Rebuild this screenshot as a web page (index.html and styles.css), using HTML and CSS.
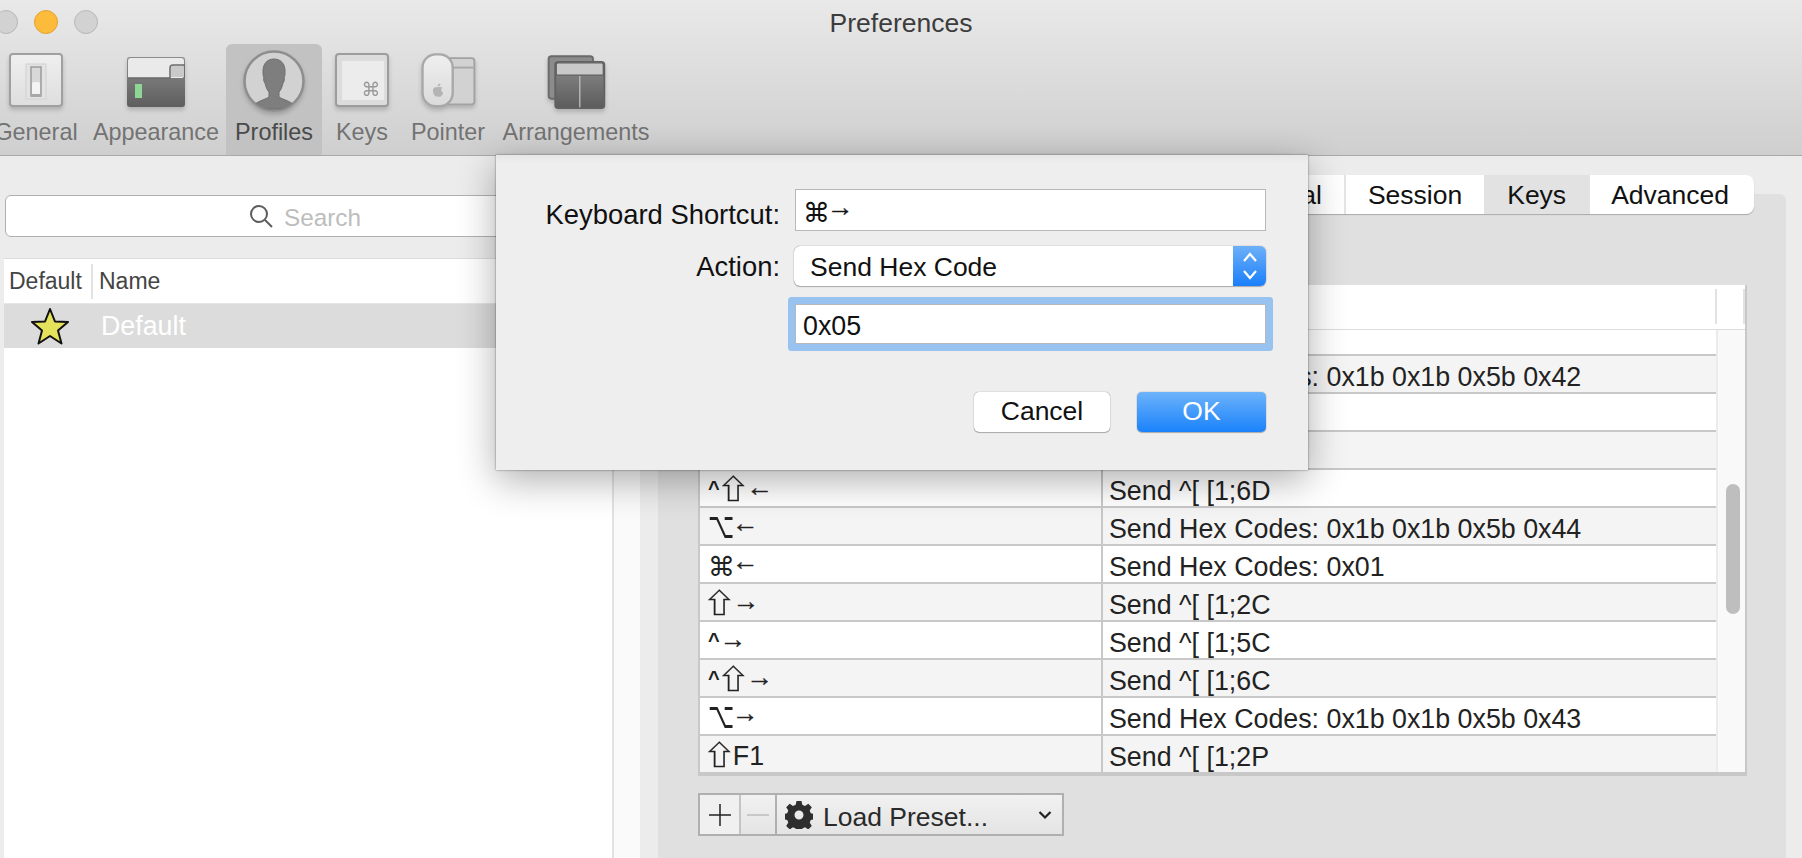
FILE: index.html
```html
<!DOCTYPE html>
<html lang="en">
<head>
  <meta charset="UTF-8">
  <title>Preferences</title>
  <link rel="stylesheet" href="styles.css">
</head>
<body>
  <div class="window">
    <header class="toolbar">
      <div class="titlebar">
        <div class="dots">
          <span class="dot"></span>
          <span class="dot dot-yellow"></span>
          <span class="dot"></span>
        </div>
        <div class="title">Preferences</div>
      </div>
      <nav class="prefs-nav">
        <div class="nav-item nav-general">
          <svg width="60" height="66" viewBox="0 0 60 66">
            <defs>
              <linearGradient id="plate" x1="0" y1="0" x2="0" y2="1"><stop offset="0" stop-color="#efefef"/><stop offset="1" stop-color="#dedede"/></linearGradient>
            </defs>
            <rect x="4" y="10" width="52" height="52" rx="3" fill="url(#plate)" stroke="#a0a0a0" stroke-width="2"/>
            <rect x="20" y="20" width="20" height="35" fill="#e3e3e3" stroke="#d2d2d2"/>
            <rect x="25" y="23" width="10" height="29" fill="#d8d8d8" stroke="#9c9c9c" stroke-width="1.5"/>
            <rect x="26" y="38" width="8" height="13" rx="2" fill="#f4f4f4"/>
            <rect x="25" y="50" width="10" height="3" fill="#a8a8a8"/>
          </svg>
          <span class="nav-label">General</span>
        </div>
        <div class="nav-item nav-appearance">
          <svg width="60" height="66" viewBox="0 0 60 66">
            <defs>
              <linearGradient id="termdark" x1="0" y1="0" x2="0" y2="1"><stop offset="0" stop-color="#8c8c8c"/><stop offset="1" stop-color="#5e5e5e"/></linearGradient>
            </defs>
            <rect x="1" y="13" width="58" height="50" rx="3" fill="url(#termdark)"/>
            <path d="M2 17a3 3 0 0 1 3-3h50a3 3 0 0 1 3 3v17H2z" fill="#eaeaea"/>
            <path d="M2 34h42v-10a3 3 0 0 1 3-3h11v13" fill="#eaeaea" stroke="#6a6a6a" stroke-width="1.5"/>
            <rect x="45" y="22" width="13" height="11" fill="#c9c9c9"/>
            <rect x="9" y="40" width="7" height="14" fill="#8fd694"/>
          </svg>
          <span class="nav-label">Appearance</span>
        </div>
        <div class="nav-item nav-profiles is-active">
          <svg width="64" height="66" viewBox="0 0 64 66">
            <defs>
              <clipPath id="avatar"><circle cx="32" cy="37" r="29"/></clipPath>
            </defs>
            <circle cx="32" cy="37" r="29.5" fill="#d2d2d2" stroke="#8e8e8e" stroke-width="2.5"/>
            <g clip-path="url(#avatar)">
              <path d="M32 15c-7 0-11 5-11 12 0 3 0 5 1 7-1 1 0 4 1 5 1 4 2 7 4 9v5c-4 3-14 4-18 12h46c-4-8-14-9-18-12v-5c2-2 3-5 4-9 1-1 2-4 1-5 1-2 1-4 1-7 0-7-4-12-11-12z" fill="#7e7e7e" stroke="#6e6e6e"/>
            </g>
          </svg>
          <span class="nav-label">Profiles</span>
        </div>
        <div class="nav-item nav-keys">
          <svg width="60" height="66" viewBox="0 0 60 66">
            <rect x="4" y="10" width="52" height="52" rx="3" fill="#dcdcdc" stroke="#9c9c9c" stroke-width="2"/>
            <rect x="10" y="17" width="42" height="39" fill="#ececec"/>
            <text x="39" y="52" class="key-glyph">⌘</text>
          </svg>
          <span class="nav-label">Keys</span>
        </div>
        <div class="nav-item nav-pointer">
          <svg width="60" height="70" viewBox="0 0 60 70">
            <defs>
              <linearGradient id="mouse" x1="0" y1="0" x2="0" y2="1"><stop offset="0" stop-color="#efefef"/><stop offset="1" stop-color="#dadada"/></linearGradient>
            </defs>
            <rect x="26" y="15" width="32" height="49" rx="3" fill="#d2d2d2" stroke="#a2a2a2" stroke-width="2"/>
            <path d="M27 25h30" stroke="#a8a8a8" stroke-width="2"/>
            <rect x="3" y="11" width="32" height="55" rx="14" fill="url(#mouse)" stroke="#a8a8a8" stroke-width="2.5"/>
            <path d="M19 46c2-1 4 0 5 0-2 2-1 5 1 6-1 2-2 4-4 4-1 0-2-1-3 0-3 0-6-8-2-10 1 0 2 0 3 0zm0-1c0-2 1-3 3-3 0 2-1 3-3 3z" fill="#b4b4b4"/>
          </svg>
          <span class="nav-label">Pointer</span>
        </div>
        <div class="nav-item nav-arrangements">
          <svg width="64" height="70" viewBox="0 0 64 70">
            <defs>
              <linearGradient id="arrdark" x1="0" y1="0" x2="0" y2="1"><stop offset="0" stop-color="#8a8a8a"/><stop offset="1" stop-color="#5c5c5c"/></linearGradient>
            </defs>
            <rect x="3" y="13" width="47" height="45" rx="3" fill="#8c8c8c" stroke="#6a6a6a" stroke-width="2"/>
            <rect x="10" y="19" width="52" height="49" rx="3" fill="url(#arrdark)" stroke="#626262" stroke-width="2"/>
            <path d="M11 33v-11a2 2 0 0 1 2-2h46a2 2 0 0 1 2 2v11z" fill="#c9c9c9" stroke="#626262" stroke-width="1.5"/>
            <path d="M36 34v33" stroke="#b8b8b8" stroke-width="1.5"/>
          </svg>
          <span class="nav-label">Arrangements</span>
        </div>
      </nav>
    </header>

    <main class="main">
      <aside class="sidebar">
        <div class="search">
          <svg width="24" height="24" viewBox="0 0 24 24"><circle cx="10" cy="10" r="8" fill="none" stroke="#5c5c5c" stroke-width="2"/><path d="M16 16l7 7" stroke="#5c5c5c" stroke-width="2"/></svg>
          <span>Search</span>
        </div>
        <div class="profile-wrap">
          <div class="profile-list">
            <div class="profile-head">
              <span class="head-default">Default</span>
              <span class="head-name">Name</span>
            </div>
            <div class="profile-row">
              <span class="star">
                <svg width="40" height="38" viewBox="0 0 40 38"><path d="M20 2l5 12.5 13 .5-10 8.500 3.500 13L20 29l-11.500 7.500 3.500-13-10-8.500 13-.5z" fill="#e4e25a" stroke="#111" stroke-width="2" stroke-linejoin="round"/></svg>
              </span>
              <span class="profile-name">Default</span>
            </div>
          </div>
          <div class="list-scroll"></div>
        </div>
      </aside>

      <section class="prefs">
        <div class="group">
          <div class="tabs">
            <div class="tab">Terminal</div>
            <div class="tab">Session</div>
            <div class="tab is-active">Keys</div>
            <div class="tab tab-last">Advanced</div>
          </div>

          <div class="keytable">
            <div class="keyhead"><span class="keyhead-end"></span></div>
            <div class="keybody">
              <div class="keyrows">
                <div class="keyrow keyrow-cut"><div class="keycol"></div><div></div></div>
                <div class="keyrow"><div class="keycol"></div><div class="actioncol">Send Hex Codes: 0x1b 0x1b 0x5b 0x42</div></div>
                <div class="keyrow"><div class="keycol"></div><div></div></div>
                <div class="keyrow"><div class="keycol"></div><div></div></div>
                <div class="keyrow"><div class="keycol"><span class="k-ctrl">^</span><span class="k-shift">⇧</span><span class="k-arrow">←</span></div><div class="actioncol">Send ^[ [1;6D</div></div>
                <div class="keyrow"><div class="keycol"><span class="k-opt">⌥</span><span class="k-arrow">←</span></div><div class="actioncol">Send Hex Codes: 0x1b 0x1b 0x5b 0x44</div></div>
                <div class="keyrow"><div class="keycol"><span class="k-cmd">⌘</span><span class="k-arrow">←</span></div><div class="actioncol">Send Hex Codes: 0x01</div></div>
                <div class="keyrow"><div class="keycol"><span class="k-shift">⇧</span><span class="k-arrow">→</span></div><div class="actioncol">Send ^[ [1;2C</div></div>
                <div class="keyrow"><div class="keycol"><span class="k-ctrl">^</span><span class="k-arrow">→</span></div><div class="actioncol">Send ^[ [1;5C</div></div>
                <div class="keyrow"><div class="keycol"><span class="k-ctrl">^</span><span class="k-shift">⇧</span><span class="k-arrow">→</span></div><div class="actioncol">Send ^[ [1;6C</div></div>
                <div class="keyrow"><div class="keycol"><span class="k-opt">⌥</span><span class="k-arrow">→</span></div><div class="actioncol">Send Hex Codes: 0x1b 0x1b 0x5b 0x43</div></div>
                <div class="keyrow keyrow-last"><div class="keycol"><span class="k-shift">⇧</span>F1</div><div class="actioncol">Send ^[ [1;2P</div></div>
              </div>
              <div class="scrollbar"><div class="thumb"></div></div>
            </div>
          </div>

          <div class="keybar">
            <div class="barbtn barbtn-add">
              <svg width="24" height="24" viewBox="0 0 24 24"><path d="M12 1v22M1 12h22" stroke="#222" stroke-width="1.500"/></svg>
            </div>
            <div class="barbtn barbtn-remove">
              <svg width="24" height="24" viewBox="0 0 24 24"><path d="M1 12h22" stroke="#bdbdbd" stroke-width="1.500"/></svg>
            </div>
            <div class="barbtn barbtn-preset">
              <svg width="28" height="28" viewBox="0 0 28 28"><path d="M11.500 0h5l.8 3.800 2.700 1.100 3.300-2.100 3.500 3.500-2.100 3.300 1.100 2.700 3.800.8v5l-3.800.8-1.100 2.700 2.100 3.300-3.500 3.500-3.300-2.100-2.700 1.100-.8 3.800h-5l-.8-3.800-2.700-1.100-3.300 2.100-3.500-3.500 2.100-3.300-1.100-2.700-3.800-.8v-5l3.800-.8 1.100-2.700-2.100-3.300 3.500-3.500 3.300 2.100 2.700-1.100zM14 9.500a4.500 4.500 0 1 0 0 9 4.500 4.500 0 0 0 0-9z" fill="#2e2e2e" fill-rule="evenodd"/></svg>
              <span class="preset-label">Load Preset...</span>
              <svg width="14" height="10" viewBox="0 0 14 10"><path d="M1.500 2L7 7.500 12.500 2" fill="none" stroke="#222" stroke-width="2.200"/></svg>
            </div>
          </div>
        </div>
      </section>
    </main>

    <div class="dialog">
      <div class="form">
        <label class="form-label form-label-first">Keyboard Shortcut:</label>
        <div class="field"><span class="k-cmd">⌘</span><span class="k-arrow">→</span></div>
        <label class="form-label">Action:</label>
        <div class="popup">
          <span class="popup-text">Send Hex Code</span>
          <span class="popup-arrows">
            <svg width="16" height="30" viewBox="0 0 16 30"><path d="M2 10l6-7 6 7M2 20l6 7 6-7" fill="none" stroke="#fff" stroke-width="2.200"/></svg>
          </span>
        </div>
        <span></span>
        <div class="field field-focus">0x05</div>
      </div>
      <div class="dialog-buttons">
        <div class="btn">Cancel</div>
        <div class="btn btn-primary">OK</div>
      </div>
    </div>
  </div>
</body>
</html>
```

FILE: styles.css
```css
* {
  box-sizing: border-box;
}

body {
  margin: 0;
  font-family: "Liberation Sans", "DejaVu Sans", sans-serif;
  font-size: 26.5px;
  color: #222;
  background: #ececec;
}

.window {
  position: relative;
  width: 1802px;
  height: 858px;
  overflow: hidden;
  display: flex;
  flex-direction: column;
  background: #ececec;
}

/* key symbols */
.k-ctrl {
  font-size: 20px;
  font-weight: 700;
  vertical-align: 4px;
}

.k-shift {
  display: inline-block;
  margin-left: -2px;
  font-family: "Noto Sans CJK JP", "DejaVu Sans", sans-serif;
  transform: scaleX(1.2);
  -webkit-text-stroke: 0.4px #222;
}

.k-ctrl + .k-shift {
  margin-left: 0;
}

.k-cmd {
  display: inline-block;
  width: 24px;
  font-family: "DejaVu Sans", sans-serif;
  transform: translateY(3px);
}

.k-opt {
  display: inline-block;
  width: 24px;
  font-family: "DejaVu Sans", sans-serif;
  transform: scale(0.85, 1.35);
  transform-origin: left center;
}

.k-arrow {
  display: inline-block;
  transform: translateY(-3px);
  -webkit-text-stroke: 0.3px #222;
}

/* toolbar */
.toolbar {
  height: 156px;
  flex-shrink: 0;
  background: linear-gradient(to bottom, #e9e9e9, #cfcfcf);
  border-bottom: 1px solid #a9a9a9;
}

.titlebar {
  height: 44px;
  display: grid;
  grid-template-columns: 1fr auto 1fr;
  align-items: center;
}

.title {
  color: #3c3c3c;
  font-size: 26.5px;
  padding-top: 2px;
}

.dots {
  display: flex;
  gap: 16px;
  margin-left: -6px;
}

.dot {
  width: 24px;
  height: 24px;
  border-radius: 50%;
  background: #d2d2d2;
  border: 1px solid #b8b8b8;
}

.dot-yellow {
  background: #fdbb3c;
  border-color: #e3a22f;
}

.prefs-nav {
  display: flex;
  margin-left: -14px;
  height: 111px;
}

.nav-item {
  display: flex;
  flex-direction: column;
  align-items: center;
  border-radius: 6px 6px 0 0;
  color: #737373;
}

.nav-item svg {
  height: 66px;
  flex-shrink: 0;
  overflow: visible;
  filter: drop-shadow(0 3px 2px rgba(0, 0, 0, 0.18));
}

.nav-item.is-active {
  background: #c2c2c2;
  color: #4a4a4a;
}

.nav-label {
  font-size: 23.4px;
  line-height: 44px;
  white-space: nowrap;
}

.nav-general { width: 100px; }
.nav-appearance { width: 140px; }
.nav-profiles { width: 96px; }
.nav-keys { width: 80px; }
.nav-pointer { width: 92px; }
.nav-arrangements { width: 164px; }

.key-glyph {
  font-family: "DejaVu Sans", sans-serif;
  font-size: 19px;
  fill: #9a9a9a;
  text-anchor: middle;
}

/* main area */
.main {
  flex: 1;
  display: flex;
  min-height: 0;
}

.sidebar {
  width: 658px;
  flex-shrink: 0;
  padding-top: 39px;
  display: flex;
  flex-direction: column;
}

.search {
  margin-left: 5px;
  width: 600px;
  height: 42px;
  flex-shrink: 0;
  display: flex;
  align-items: center;
  justify-content: center;
  gap: 11px;
  background: #fff;
  border: 1px solid #b0b0b0;
  border-radius: 6px;
  color: #bdbdbd;
  font-size: 24.3px;
}

.search span {
  padding-top: 3px;
}

.profile-wrap {
  flex: 1;
  display: flex;
  margin-top: 21px;
  margin-left: 4px;
  margin-right: 18px;
}

.profile-list {
  width: 610px;
  background: #fff;
  border-right: 2px solid #e2e2e2;
  border-top: 1px solid #dcdcdc;
}

.list-scroll {
  flex: 1;
  background: #fafafa;
}

.profile-head {
  height: 45px;
  display: flex;
  align-items: center;
  font-size: 23px;
  color: #444;
  border-bottom: 1px solid #e6e6e6;
}

.head-default {
  width: 89px;
  height: 35px;
  line-height: 35px;
  padding-left: 5px;
  border-right: 2px solid #e2e2e2;
}

.head-name {
  padding-left: 6px;
}

.profile-row {
  height: 44px;
  display: flex;
  align-items: center;
  background: #dcdcdc;
  color: #fff;
}

.star {
  width: 97px;
  padding-left: 26px;
  display: flex;
}

.profile-name {
  font-size: 26.8px;
}

/* right side */
.prefs {
  flex: 1;
  padding: 38px 16px 0 0;
  min-width: 0;
}

.group {
  height: 100%;
  display: flex;
  flex-direction: column;
  background: #e0e0e0;
  border-radius: 6px 6px 0 0;
  padding: 0 39px 0 40px;
}

.tabs {
  display: flex;
  justify-content: flex-end;
  height: 39px;
  flex-shrink: 0;
  margin: -19px -7px 0 0;
  background: #fff;
  border-radius: 0 8px 8px 0;
  box-shadow: 0 1px 1px #aaa;
}

.tab {
  display: flex;
  align-items: center;
  padding: 2px 22px 0;
  color: #111;
  border-left: 2px solid #e4e4e4;
  white-space: nowrap;
}

.tab.is-active {
  background: #e2e2e2;
  border-left: 0;
  padding: 2px 24px 0 23px;
}

.tab.tab-last {
  border-left: 0;
  padding: 2px 25px 0 21px;
}

.keytable {
  margin-top: 71px;
  height: 491px;
  flex-shrink: 0;
  display: flex;
  flex-direction: column;
  background: #fff;
  border: solid #c8c8c8;
  border-width: 0 2px 4px 2px;
}

.keyhead {
  height: 45px;
  flex-shrink: 0;
  padding-top: 4px;
  border-bottom: 1px solid #dcdcdc;
}

.keyhead-end {
  display: block;
  width: 30px;
  height: 35px;
  margin-left: auto;
  border-left: 2px solid #e2e2e2;
  border-right: 2px solid #e2e2e2;
}

.keybody {
  flex: 1;
  display: flex;
  min-height: 0;
}

.keyrows {
  flex: 1;
}

.keyrow {
  height: 38px;
  display: grid;
  grid-template-columns: 403px 1fr;
  border-bottom: 2px solid #c8c8c8;
  background: #fff;
  line-height: 36px;
  white-space: nowrap;
  font-size: 26.8px;
}

.keyrow:nth-child(even) {
  background: #f4f4f4;
}

.keyrow-cut {
  height: 26px;
}

.keyrow-last {
  height: 36px;
  border-bottom: 0;
}

.keycol {
  padding-left: 8px;
  border-right: 2px solid #c8c8c8;
}

.actioncol {
  padding: 3px 0 0 6px;
}

.scrollbar {
  width: 29px;
  padding: 154px 5px 0 8px;
  background: #f9f9f9;
  border-left: 2px solid #ececec;
}

.thumb {
  height: 130px;
  border-radius: 8px;
  background: #bebebe;
}

.keybar {
  display: flex;
  flex-shrink: 0;
  margin-top: 17px;
  height: 43px;
  border: 2px solid #b0b0b0;
  width: 366px;
  background: linear-gradient(to bottom, #f1f1f1, #e4e4e4);
}

.barbtn {
  display: flex;
  align-items: center;
  justify-content: center;
}

.barbtn-add {
  width: 39px;
  background: #f0f0f0;
}

.barbtn-remove {
  width: 38px;
  border-left: 2px solid #c4c4c4;
  border-right: 2px solid #b0b0b0;
}

.barbtn-preset {
  flex: 1;
  justify-content: flex-start;
  padding-left: 8px;
  gap: 10px;
  color: #2a2a2a;
}

.preset-label {
  flex: 1;
  padding-top: 5px;
}

.barbtn-preset svg:last-child {
  margin-right: 10px;
}

/* sheet */
.dialog {
  position: absolute;
  left: 496px;
  top: 155px;
  width: 812px;
  height: 315px;
  padding-top: 34px;
  background: linear-gradient(to bottom, #e6e6e6, #eeeeee 8px);
  box-shadow: 0 0 2px rgba(0, 0, 0, 0.5), 0 10px 36px rgba(0, 0, 0, 0.32);
  color: #111;
}

.form {
  display: grid;
  grid-template-columns: 283px 471px;
  column-gap: 16px;
  row-gap: 15px;
  align-items: center;
}

.form-label {
  text-align: right;
  font-size: 27.4px;
  padding-top: 2px;
  margin-right: -1px;
}

.form-label-first {
  padding-top: 10px;
}

.field {
  height: 42px;
  background: #fff;
  border: 1px solid #b8b8b8;
  line-height: 40px;
  padding-left: 7px;
  font-size: 26.8px;
}

.field-focus {
  height: 40px;
  line-height: 42px;
  margin-top: 3px;
  border-radius: 1px;
  box-shadow: 0 0 0 7px #98c2ef;
}

.popup {
  height: 40px;
  margin-left: -1px;
  display: flex;
  background: #fff;
  border-radius: 6px;
  box-shadow: 0 0 1px rgba(0, 0, 0, 0.6), 0 1px 1px rgba(0, 0, 0, 0.25);
  overflow: hidden;
}

.popup-text {
  flex: 1;
  padding: 2px 0 0 16px;
  line-height: 38px;
}

.popup-arrows {
  width: 33px;
  display: flex;
  align-items: center;
  justify-content: center;
  background: linear-gradient(to bottom, #6db0f8, #1a7ffb);
}

.dialog-buttons {
  display: flex;
  justify-content: flex-end;
  gap: 27px;
  margin: 48px 42px 0 0;
}

.btn {
  width: 136px;
  height: 40px;
  line-height: 38px;
  text-align: center;
  background: #fff;
  border-radius: 5px;
  box-shadow: 0 0 1px rgba(0, 0, 0, 0.6), 0 1px 1px rgba(0, 0, 0, 0.25);
}

.btn-primary {
  width: 129px;
  color: #fff;
  background: linear-gradient(to bottom, #6db3fa, #1a82fb);
}
```
